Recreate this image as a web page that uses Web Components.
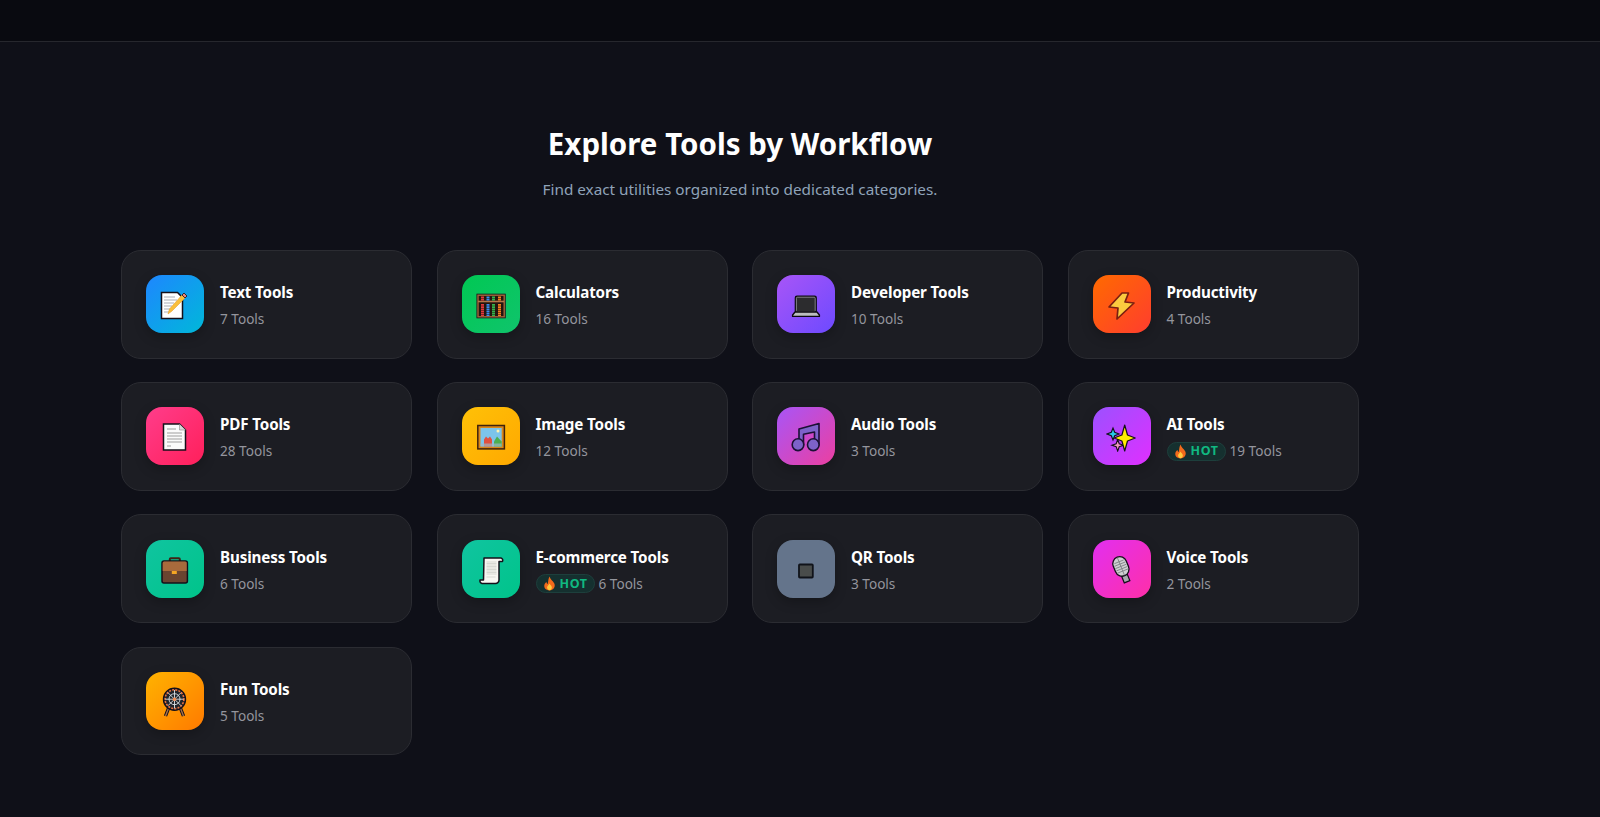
<!DOCTYPE html>
<html lang="en"><head><meta charset="utf-8"><title>Explore Tools by Workflow</title>
<style>
html,body{margin:0;background:#0f1018;color:#fff;font-family:"Noto Sans","Open Sans",sans-serif;height:817px;overflow:hidden}
</style></head><body>
<top-bar></top-bar>
<tools-section heading="Explore Tools by Workflow" sub="Find exact utilities organized into dedicated categories.">
<tool-card name="Text Tools" count="7 Tools" icon="memo" grad="#1e86ff,#00b8d9"></tool-card>
<tool-card name="Calculators" count="16 Tools" icon="abacus" grad="#00c853,#10c46c"></tool-card>
<tool-card name="Developer Tools" count="10 Tools" icon="laptop" grad="#a855f7,#6d4aff"></tool-card>
<tool-card name="Productivity" count="4 Tools" icon="bolt" grad="#ff6a00,#ff3d2e"></tool-card>
<tool-card name="PDF Tools" count="28 Tools" icon="page" grad="#ff3d8b,#ff1f5a"></tool-card>
<tool-card name="Image Tools" count="12 Tools" icon="picture" grad="#ffc107,#ffa800"></tool-card>
<tool-card name="Audio Tools" count="3 Tools" icon="music" grad="#a855f7,#ec3fa0"></tool-card>
<tool-card name="AI Tools" count="19 Tools" icon="sparkles" grad="#9b51ff,#e02fff" hot></tool-card>
<tool-card name="Business Tools" count="6 Tools" icon="briefcase" grad="#10c4a0,#00c48a"></tool-card>
<tool-card name="E-commerce Tools" count="6 Tools" icon="scroll" grad="#10c4a0,#00c48a" hot></tool-card>
<tool-card name="QR Tools" count="3 Tools" icon="qr" grad="#64748b,#64748b"></tool-card>
<tool-card name="Voice Tools" count="2 Tools" icon="mic" grad="#e22ff0,#ff2fa8"></tool-card>
<tool-card name="Fun Tools" count="5 Tools" icon="wheel" grad="#ffb300,#ff7a00"></tool-card>
</tools-section>
<script>
const O='#14101a';
const ICONS={
memo:`<path d="M2.500 4.500h16l5 5v21h-21z" fill="#fff" stroke="${O}" stroke-width="1.500"/><path d="M5 9h11M5 12h13M5 15h10M5 18h8M5 21h6M5 24h5" stroke="#a9adb5" stroke-width="1"/><path d="M9 26l1.500-5L23 7l3 3-13 13z" fill="#f9bf3b" stroke="#e8a02c" stroke-width=".6"/><path d="M23 7l2-2 3 3-2 2z" fill="#e8837a" stroke="${O}" stroke-width=".8"/>`,
abacus:`<rect x="2.800" y="7" width="26.600" height="22" fill="#23150f" stroke="#a5653a" stroke-width="1.800"/><rect x="1.900" y="6.100" width="28.400" height="23.800" fill="none" stroke="${O}" stroke-width=".8"/><path d="M3 13.500h26" stroke="#b5764a" stroke-width="1.600"/><g stroke-width="3" stroke-dasharray="1.700 .5"><path d="M7.500 8.500v4M7.500 16v12" stroke="#e5383b"/><path d="M13 8.500v4M13 16v12" stroke="#3b8df0"/><path d="M18.500 8.500v4M18.500 16v12" stroke="#35b34a"/><path d="M24.500 8.500v4M24.500 16v12" stroke="#f4801f"/></g>`,
laptop:`<rect x="5.600" y="8.400" width="20.400" height="16" rx="1.400" fill="#2c2c2e" stroke="#0c0a10" stroke-width="1.800"/><rect x="6.400" y="9.200" width="18.800" height="14.600" rx="1" fill="none" stroke="#9d9da2" stroke-width=".8"/><path d="M5 24h22l2.400 3v1.400H2.600V27z" fill="#bcbdbf" stroke="#0c0a10" stroke-width="1.400" stroke-linejoin="round"/>`,
bolt:`<path d="M16 5h6.500L19 14l9 1L11 31l1-11-9-1z" fill="#fbcb3f" stroke="#7a1f10" stroke-width="1.700" stroke-linejoin="round"/>`,
page:`<path d="M4.500 4h16l6 6v20H4.500z" fill="#fafafa" stroke="${O}" stroke-width="1.500"/><path d="M20.500 4v6h6" fill="#d9d9d9" stroke="#8a8a8a" stroke-width=".6"/><path d="M8 9h9M8 13h15M8 16h15M8 19h15M8 22h15M8 26h4" stroke="#bdbdbd" stroke-width="1.300"/>`,
picture:`<rect x="2.800" y="5.500" width="26.600" height="23.400" fill="#d9861a" stroke="#3f220c" stroke-width="1.500"/><rect x="5.500" y="8" width="21.200" height="18.500" fill="#7cc4ea"/><circle cx="23" cy="11" r="1.500" fill="#fff3b0"/><path d="M19 26.500v-5l3-5 4.700 5v5z" fill="#4caf50"/><path d="M9 26.500v-7l2-3 2 2 2-2 2 3v7z" fill="#e0503f"/><path d="M5.500 26.500v-3h21v3z" fill="#9fb6c2" opacity=".7"/>`,
music:`<g fill="#7d62c9" stroke="#1b1035" stroke-width="1.600" stroke-linejoin="round"><path d="M9 9L29 3.500V25h-4.500V12L13.500 14.200V25H9z"/><ellipse cx="8" cy="24.700" rx="5.800" ry="5.900"/><ellipse cx="23.300" cy="24.700" rx="5.800" ry="5.900"/></g>`,
sparkles:`<path d="M7 8l1.700 4.300 4.300 1.700-4.300 1.700L7 20l-1.700-4.300L1 14l4.300-1.700z" fill="#27c8e8" stroke="${O}" stroke-width="1.100"/><path d="M11.700 19.500l1.500 4.300 4.300 1.500-4.300 1.500-1.500 4.300-1.500-4.300-4.300-1.500 4.300-1.500z" fill="#f49ac1" stroke="${O}" stroke-width="1.100"/><path d="M18.700 5l2.800 10 7.700 3-7.700 3-2.800 10-2.800-10-7.700-3 7.700-3z" fill="#ffee00" stroke="${O}" stroke-width="1.200" stroke-linejoin="round"/>`,
briefcase:`<path d="M10.800 9V6.200a1 1 0 0 1 1-1h8a1 1 0 0 1 1 1V9" fill="none" stroke="#3f2214" stroke-width="2"/><rect x="3" y="8" width="25.400" height="22" rx="2" fill="#6a4430" stroke="${O}" stroke-width="1.500"/><path d="M3.700 18V10a1.500 1.500 0 0 1 1.500-1.500h21a1.500 1.500 0 0 1 1.500 1.500v8z" fill="#a86a3c"/><rect x="12.800" y="18" width="5" height="3" fill="#f5a623"/>`,
scroll:`<path d="M9 5h17a2.500 2.500 0 0 1 1.500 3.500H24V27a3.500 3.500 0 0 1-3.500 3.500H7A3 3 0 0 1 5 27h3.500z" fill="#f7f7f2" stroke="${O}" stroke-width="1.500" stroke-linejoin="round"/><path d="M11.500 9h10M11.500 12h10M11.500 15h10M11.500 18h10M11.500 21h10M11.500 24h9M11.500 10.500h10M11.500 13.500h10M11.500 16.500h10M11.500 19.500h10" stroke="#c9cbc6" stroke-width=".7"/>`,
qr:`<rect x="9" y="11.500" width="13.800" height="13" rx=".8" fill="#494c4b" stroke="#10131a" stroke-width="1.800"/>`,
mic:`<g transform="rotate(-22 15 15)"><rect x="12.500" y="21" width="6" height="9" fill="#a8aaae" stroke="${O}" stroke-width="1.200"/><rect x="8.500" y="3.500" width="14" height="20" rx="7" fill="#cfd0d2" stroke="${O}" stroke-width="1.300"/><path d="M10.500 8.500h10M9.500 11h12M9.500 13.500h12M9.500 16h12M9.500 18.500h12M15.500 4v19" stroke="#7d7f83" stroke-width=".8"/></g>`,
wheel:`<path d="M10 22l-3.500 9M21 22l3.500 9" stroke="${O}" stroke-width="3.400"/><path d="M10 22l-3.500 9M21 22l3.500 9" stroke="#a5714f" stroke-width="1.400"/><circle cx="15.500" cy="14.200" r="11" fill="#20242b" stroke="${O}" stroke-width="1.400"/><circle cx="15.500" cy="14.200" r="9.400" fill="none" stroke="#ea6f3c" stroke-width="1.600" stroke-dasharray="2 1.200"/><circle cx="15.500" cy="14.200" r="5.500" fill="none" stroke="#dbe2e6" stroke-width=".9"/><path d="M15.500 5v18.400M6.300 14.200h18.400M9 7.700l13 13M22 7.700l-13 13" stroke="#dbe2e6" stroke-width=".9"/><circle cx="15.500" cy="14.200" r="1.800" fill="#ef8a52"/>`
};
const FIRE=`<svg width="13" height="15" viewBox="0 0 12 14" aria-hidden="true"><path d="M6 .5C6.500 3 9 4.500 10.500 7c1.300 3-.8 6.500-4.500 6.500S.2 10.500 1.500 7.500c.5-1 1.200-1.700 1.800-2 0 1 .3 1.700 1 2C5 5 4.800 2.500 6 .5z" fill="#f26a1b"/><path d="M6 7c.4 1.200 2.200 2 2.200 3.800 0 1.400-1 2.400-2.200 2.400s-2.300-1-2.300-2.400C3.700 9.200 5.500 8.500 6 7z" fill="#ffc93c"/></svg>`;

class TopBar extends HTMLElement{constructor(){super();this.attachShadow({mode:'open'}).innerHTML=`<style>:host{display:block;height:41px;background:#090a10;border-bottom:1px solid #26272d}</style>`}}
customElements.define('top-bar',TopBar);

class ToolsSection extends HTMLElement{constructor(){super();const s=this.attachShadow({mode:'open'});
s.innerHTML=`<style>
:host{display:block;padding:82px 0 0 121px}
.head{width:1238px;text-align:center}
h2{margin:0;font-size:29.500px;line-height:40px;font-weight:700;color:#fff}
p{margin:13px 0 0;font-size:15.300px;line-height:24px;color:#8fa3b8}
.grid{width:1238px;margin-top:49px;display:grid;grid-template-columns:repeat(4,291px);grid-auto-rows:108.500px;gap:23.700px 24.500px}
</style><div class="head"><h2></h2><p></p></div><div class="grid"><slot></slot></div>`;}
connectedCallback(){this.shadowRoot.querySelector('h2').textContent=this.getAttribute('heading');this.shadowRoot.querySelector('p').textContent=this.getAttribute('sub');}}
customElements.define('tools-section',ToolsSection);

class ToolCard extends HTMLElement{constructor(){super();this.attachShadow({mode:'open'})}
connectedCallback(){const g=this.getAttribute('grad');const hot=this.hasAttribute('hot');
this.shadowRoot.innerHTML=`<style>
:host{display:flex;align-items:center;gap:16px;box-sizing:border-box;padding:0 24px;background:#1c1d23;border:1px solid #2b2c32;border-radius:20px}
.ic{flex:none;width:58px;height:58px;border-radius:16px;display:flex;align-items:center;justify-content:center;background:linear-gradient(135deg,${g});box-shadow:0 4px 12px rgba(0,0,0,.25)}
svg.g{width:32px;height:32px;display:block}
.t{display:flex;flex-direction:column;gap:5px;min-width:0;padding-top:3px}
.n{font-size:15.200px;line-height:22px;font-weight:700;letter-spacing:-.15px;color:#fff;white-space:nowrap}
.c{font-size:13.600px;line-height:22px;color:#94959d;display:flex;align-items:center;gap:4px;white-space:nowrap}
.h{display:inline-flex;align-items:center;justify-content:center;gap:4px;box-sizing:border-box;width:59px;height:19px;border-radius:10px;background:#15302f;border:1px solid #1d3f3c;color:#10b981;font-size:12.500px;font-weight:700;letter-spacing:.5px}
</style><div class="ic"><svg class="g" viewBox="0 0 32 32" aria-hidden="true">${ICONS[this.getAttribute('icon')]}</svg></div>
<div class="t"><div class="n">${this.getAttribute('name')}</div><div class="c">${hot?`<span class="h">${FIRE}HOT</span>`:''}<span>${this.getAttribute('count')}</span></div></div>`;}}
customElements.define('tool-card',ToolCard);
</script>
</body></html>
